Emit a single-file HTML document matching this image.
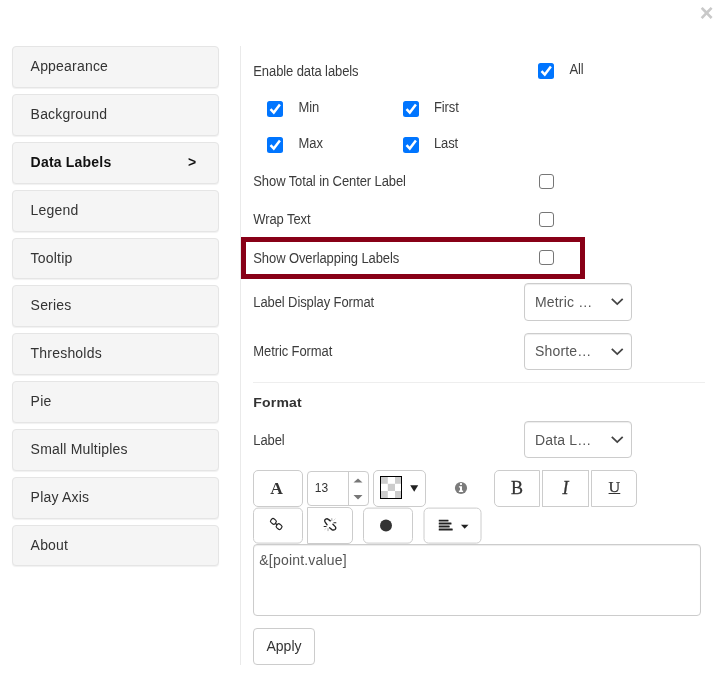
<!DOCTYPE html>
<html><head><meta charset="utf-8">
<style>
*{box-sizing:border-box}
html,body{margin:0;padding:0;background:#fff}
body{will-change:transform;width:714px;height:676px;position:relative;overflow:hidden;font-family:"Liberation Sans",Arial,sans-serif;font-size:14px;color:#333}
.close{position:absolute;left:696.6px;top:0.6px;width:20px;text-align:center;font-size:23.5px;font-weight:bold;color:#c9c9c9;line-height:24px}
.nav div{position:absolute;left:12px;width:207px;height:42px;background:#f5f5f5;border:1px solid #e5e5e5;border-radius:4px;box-shadow:0 1px 1px rgba(0,0,0,.06);padding:0 0 0 17.6px;line-height:38.6px;font-size:14px;letter-spacing:.2px;color:#333}
.nav div.act{font-weight:bold;color:#111}
.nav div.act span{position:absolute;left:175px;top:0}
.vline{position:absolute;left:240px;top:46px;width:1px;height:619px;background:#eaeaea}
.lbl{position:absolute;left:253.3px;font-size:13px;color:#3c3c3c;line-height:16px;white-space:nowrap;letter-spacing:-.1px;transform:scaleY(1.055);transform-origin:0 12.5px}
.cb{position:absolute;width:15px;height:15px;border:1px solid #767676;border-radius:3px;background:#fff}
.cb.on{width:16px;height:16px;background:#0075ff;border:0;border-radius:2.5px}
.cb.on svg{position:absolute;left:0;top:0}
.sel{position:absolute;left:524px;width:108px;height:37px;border:1px solid #ccc;border-radius:4px;background:#fff;font-size:14px;color:#555;line-height:35px;padding-left:9.9px;letter-spacing:.2px;box-shadow:inset 0 1px 1px rgba(0,0,0,.075)}
.sel svg{position:absolute;left:86px;top:14.2px}
.hl{position:absolute;left:241px;top:237px;width:344px;height:41.6px;border:5px solid #880017}
.hr{position:absolute;left:253px;top:382px;width:452px;height:1px;background:#eee}
.btn{position:absolute;border:1px solid #ccc;border-radius:4px;background:#fff}
.ta{position:absolute;left:253px;top:544px;width:448px;height:71.5px;border:1px solid #ccc;border-radius:4px;font-size:14px;color:#555;padding:5.3px 5.3px;line-height:20px;letter-spacing:.2px;box-shadow:inset 0 1px 1px rgba(0,0,0,.075)}
.ser{font-family:"Liberation Serif","Times New Roman",serif;color:#333;text-align:center}
</style></head><body>
<div class="close">×</div>
<div class="nav">
<div style="top:46px;height:42px">Appearance</div>
<div style="top:94px;height:42px">Background</div>
<div class="act" style="top:142px;height:42px">Data Labels<span>&gt;</span></div>
<div style="top:190px;height:42px">Legend</div>
<div style="top:238px;height:41px">Tooltip</div>
<div style="top:285px;height:42px">Series</div>
<div style="top:333px;height:42px">Thresholds</div>
<div style="top:381px;height:42px">Pie</div>
<div style="top:429px;height:42px">Small Multiples</div>
<div style="top:477px;height:42px">Play Axis</div>
<div style="top:525px;height:41px">About</div>
</div>
<div class="vline"></div>

<div class="lbl" style="top:64px">Enable data labels</div>
<div class="lbl" style="left:569.4px;top:62px">All</div>
<div class="lbl" style="left:298.6px;top:100px">Min</div>
<div class="lbl" style="left:433.9px;top:100px">First</div>
<div class="lbl" style="left:298.6px;top:136px">Max</div>
<div class="lbl" style="left:433.9px;top:136px">Last</div>
<div class="lbl" style="top:174px">Show Total in Center Label</div>
<div class="lbl" style="top:212px">Wrap Text</div>
<div class="lbl" style="top:251px">Show Overlapping Labels</div>
<div class="lbl" style="top:295px">Label Display Format</div>
<div class="lbl" style="top:344px">Metric Format</div>
<div class="lbl" style="top:394px;font-weight:bold;font-size:14px;letter-spacing:.2px;transform:scaleY(.92);color:#333">Format</div>
<div class="lbl" style="top:433px">Label</div>

<div class="cb on" style="left:538px;top:63px"><svg width="16" height="16" viewBox="0 0 16 16"><path d="M3.5 8.1l3.3 3.4L12.9 3.6" fill="none" stroke="#fff" stroke-width="2.5"/></svg></div>
<div class="cb on" style="left:267px;top:101px"><svg width="16" height="16" viewBox="0 0 16 16"><path d="M3.5 8.1l3.3 3.4L12.9 3.6" fill="none" stroke="#fff" stroke-width="2.5"/></svg></div>
<div class="cb on" style="left:403px;top:101px"><svg width="16" height="16" viewBox="0 0 16 16"><path d="M3.5 8.1l3.3 3.4L12.9 3.6" fill="none" stroke="#fff" stroke-width="2.5"/></svg></div>
<div class="cb on" style="left:267px;top:137px"><svg width="16" height="16" viewBox="0 0 16 16"><path d="M3.5 8.1l3.3 3.4L12.9 3.6" fill="none" stroke="#fff" stroke-width="2.5"/></svg></div>
<div class="cb on" style="left:403px;top:137px"><svg width="16" height="16" viewBox="0 0 16 16"><path d="M3.5 8.1l3.3 3.4L12.9 3.6" fill="none" stroke="#fff" stroke-width="2.5"/></svg></div>
<div class="cb" style="left:538.5px;top:173.5px"></div>
<div class="cb" style="left:538.5px;top:211.5px"></div>
<div class="cb" style="left:538.5px;top:250px"></div>

<div class="hl"></div>

<div class="sel" style="top:283px;height:38px;line-height:37px">Metric …<svg width="14" height="9" viewBox="0 0 14 9"><path d="M0.8 0.9L6.25 6.1L11.7 0.9" fill="none" stroke="#444" stroke-width="1.8"/></svg></div>
<div class="sel" style="top:333px">Shorte…<svg width="14" height="9" viewBox="0 0 14 9"><path d="M0.8 0.9L6.25 6.1L11.7 0.9" fill="none" stroke="#444" stroke-width="1.8"/></svg></div>
<div class="hr"></div>
<div class="sel" style="top:421px;line-height:37px">Data L…<svg width="14" height="9" viewBox="0 0 14 9"><path d="M0.8 0.9L6.25 6.1L11.7 0.9" fill="none" stroke="#444" stroke-width="1.8"/></svg></div>

<!-- toolbar row 1 -->
<div class="btn ser" style="left:253px;top:470px;width:50px;height:36.5px;border-radius:5px;font-weight:bold;font-size:17.5px;line-height:35.5px;padding-right:3px">A</div>
<div class="btn" style="left:307px;top:471px;width:62px;height:34.5px;border-radius:4px;font-size:12px;line-height:33.5px;padding-left:6.8px;color:#333">13
 <div style="position:absolute;left:40px;top:0;width:1px;height:33px;background:#ccc"></div>
 <svg style="position:absolute;left:44.5px;top:5.5px" width="10" height="22" viewBox="0 0 10 22"><path d="M.5 4.6L5 .4l4.500 4.200zM.5 17l4.500 4.400L9.500 17z" fill="#777"/></svg>
</div>
<div class="btn" style="left:373px;top:470px;width:53px;height:36.5px;border-radius:5px">
 <svg style="position:absolute;left:6px;top:5px" width="22" height="23" viewBox="0 0 22 23"><rect x=".5" y=".5" width="21" height="22" fill="#fff" stroke="#000"/><g fill="#ccc"><rect x="1" y="1" width="6.800" height="6.800"/><rect x="15" y="1" width="6" height="6.800"/><rect x="7.800" y="7.800" width="7.200" height="7.200"/><rect x="1" y="15" width="6.800" height="7"/><rect x="15" y="15" width="6" height="7"/></g></svg>
 <svg style="position:absolute;left:36px;top:14px" width="9" height="8" viewBox="0 0 9 8"><path d="M.2 .2h8L4.200 6.800z" fill="#222"/></svg>
</div>
<svg style="position:absolute;left:454px;top:481px" width="14" height="14" viewBox="0 0 14 14"><circle cx="7" cy="7" r="6.100" fill="#7b7b7b"/><g fill="#fff"><rect x="6" y="2.100" width="2" height="1.800"/><path d="M4.900 5.200h3.100v4.300h1.100v1.500H4.900V9.500H6V6.500H4.900z"/></g></svg>
<div class="btn ser" style="left:494px;top:470px;width:46px;height:36.500px;border-radius:5px 0 0 5px;font-size:18px;line-height:35.5px;-webkit-text-stroke:.3px #333">B</div>
<div class="btn ser" style="left:542px;top:470px;width:47px;height:36.500px;border-radius:0;font-style:italic;font-size:18px;line-height:35.5px;-webkit-text-stroke:.3px #333">I</div>
<div class="btn ser" style="left:591px;top:470px;width:46px;height:36.500px;border-radius:0 5px 5px 0;font-size:15px;line-height:32px;-webkit-text-stroke:.25px #333"><span style="display:inline-block;transform:scaleX(1.08);text-decoration:underline;text-underline-offset:1px">U</span></div>

<!-- toolbar row 2 -->
<div class="btn" style="left:253px;top:507px;width:50px;height:36px;border-radius:5px;transform:translateY(.6px)">
 <svg style="position:absolute;left:14px;top:7px" width="18" height="18" viewBox="0 0 18 18"><g fill="none" stroke="#262626" stroke-width="1.200"><rect x="-2.700" y="-2.400" width="5.400" height="4.800" rx="1.800" transform="translate(5.400,5.800) rotate(40)"/><rect x="-2.700" y="-2.400" width="5.400" height="4.800" rx="1.800" transform="translate(11.100,11) rotate(40)"/><path d="M7.300 7.600L9.200 9.300" stroke-width="1.400"/></g></svg>
</div>
<div class="btn" style="left:307px;top:507px;width:46px;height:37px;border-radius:0 5px 5px 0">
 <svg style="position:absolute;left:12px;top:7px" width="20" height="20" viewBox="0 0 20 20"><g transform="translate(10 9.4) scale(.94) translate(-10 -9.2)"><g fill="none" stroke="#262626" stroke-width="1.500" stroke-linecap="round"><path d="M6.900 9.600L4.900 6.700Q3.600 4.700 5.500 3.600Q7 2.800 8.300 3.900L10.300 5.400"/><path d="M13.100 9.100L15.300 11.300Q17 13.100 15.300 14.600Q13.700 15.800 12 14.700L9.600 12.800"/></g><g fill="none" stroke-linecap="round"><path d="M14.100 7.500h2.200M3.700 11.500h2.200" stroke="#262626" stroke-width="1.100"/><path d="M11.900 3.200v1.800M7.900 13.800v1.900" stroke="#bbb" stroke-width="1.400"/><path d="M14.200 4.700l1.300-1.400M4.400 14.600l1.400-1.200" stroke="#d4d4d4" stroke-width="1"/></g></g></svg>
</div>
<div class="btn" style="left:363px;top:507px;width:50px;height:36px;border-radius:5px;transform:translateY(.6px)">
 <div style="position:absolute;left:15.500px;top:10.700px;width:12px;height:12px;border-radius:50%;background:#333"></div>
</div>
<div class="btn" style="left:423px;top:507px;width:58px;height:36px;border-radius:5px;transform:translate(.5px,.6px)">
 <svg style="position:absolute;left:14px;top:10.600px" width="16" height="13" viewBox="0 0 16 13"><g fill="#222"><rect x="0" y="0" width="10" height="1.900" rx=".5"/><rect x="0" y="3" width="13" height="1.900" rx=".5"/><rect x="0" y="6" width="11.200" height="1.900" rx=".5"/><rect x="0" y="9" width="14.200" height="1.900" rx=".5"/></g></svg>
 <svg style="position:absolute;left:35.500px;top:16.400px" width="9" height="5" viewBox="0 0 9 5"><path d="M.2 0h8L4.200 4.200z" fill="#222"/></svg>
</div>

<div class="ta">&amp;[point.value]</div>
<div class="btn" style="left:253px;top:628px;width:62px;height:36.500px;font-size:14px;color:#333;line-height:35px;text-align:center">Apply</div>
</body></html>
